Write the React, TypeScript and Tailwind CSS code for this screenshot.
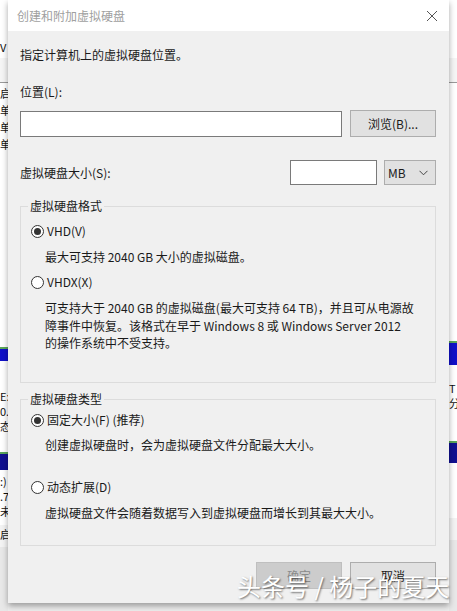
import React from 'react';

const font = { fontFamily: '"Noto Sans CJK SC", "Noto Sans", sans-serif' };

function Radio({ checked }: { checked?: boolean }) {
  return (
    <span className="w-[13px] h-[13px] rounded-full border border-[#333] bg-white flex items-center justify-center flex-shrink-0">
      {checked && <span className="w-[7px] h-[7px] rounded-full bg-[#333]" />}
    </span>
  );
}

function Group({ title, height, children }: { title: string; height: string; children: React.ReactNode }) {
  return (
    <div className={`relative border border-[#dcdcdc] ${height}`}>
      <span className="absolute -top-[10px] left-[7px] bg-[#f0f0f0] px-[2px] leading-[18px] text-[12px] text-[#1a1a1a]">{title}</span>
      {children}
    </div>
  );
}

// 背后窗口露出的边缘
function Side({ right }: { right?: boolean }) {
  return (
    <div className="w-[8px] bg-white flex flex-col text-[11px] leading-[18px] text-[#111] overflow-hidden">
      <div className="h-[38px]" />
      <div className="h-[20px]">{right ? '' : 'V'}</div>
      <div className="h-[24px] bg-[#f5f5f5]" />
      <div className="h-[1px] bg-[#999]" />
      {!right && (
        <div className="h-[70px] leading-[17px] pt-[2px]">
          <div>启</div><div>单</div><div>单</div><div>单</div>
        </div>
      )}
      {right && <div className="h-[70px]" />}
      <div className={right ? 'h-[188px]' : 'h-[194px]'} />
      <div className="h-[2px] bg-[#5aa55a]" />
      <div className={right ? 'h-[22px] bg-[#1010c8]' : 'h-[12px] bg-[#1010c8]'} />
      <div className={right ? 'h-[76px] leading-[15px] pt-[16px]' : 'h-[91px] leading-[15px] pt-[28px]'}>
        {right ? <><div>T</div><div>分</div></> : <><div>E:</div><div>0.</div><div>态</div></>}
      </div>
      <div className="h-[2px] bg-[#5aa55a]" />
      <div className={right ? 'h-[20px] bg-[#101090]' : 'h-[16px] bg-[#101090]'} />
      <div className="h-[55px] leading-[15px] pt-[4px]">{right ? '' : <><div>:)</div><div>.7</div><div>未</div></>}</div>
      <div className="h-[22px] bg-[#f3f3f3]">{right ? '' : '启'}</div>
      <div className="flex-1 bg-[#e8e8e8]" />
    </div>
  );
}

export default function App() {
  return (
    <div className="w-[457px] h-[611px] flex bg-[#ededed] overflow-hidden" style={font}>
      <Side />
      <div className="relative w-[441px] h-[603px] flex flex-col bg-[#f0f0f0] shadow-[0_3px_6px_rgba(0,0,0,0.35)] text-[12px] text-[#1a1a1a]">
        {/* 标题栏 */}
        <div className="h-[31px] bg-white flex items-center justify-between pl-[9px] pr-[10px]">
          <span className="text-[#a0a0a0] text-[12px]">创建和附加虚拟硬盘</span>
          <svg width="12" height="12" viewBox="0 0 12 12" className="mr-[1px]">
            <path d="M1 1 L11 11 M11 1 L1 11" stroke="#555" strokeWidth="1" />
          </svg>
        </div>

        <div className="flex flex-col pl-[12px] pr-[13px]">
          <div className="mt-[15px] h-[18px] leading-[18px]">指定计算机上的虚拟硬盘位置。</div>
          <div className="mt-[19px] h-[18px] leading-[18px]">位置(L):</div>
          <div className="mt-[10px] flex gap-[8px]">
            <div className="w-[322px] h-[26px] bg-white border border-[#7a7a7a]" />
            <div className="w-[86px] h-[27px] bg-[#e1e1e1] border border-[#adadad] flex items-center justify-center -mt-[1px]">浏览(B)...</div>
          </div>
          <div className="mt-[23px] flex items-center h-[25px]">
            <span className="flex-1">虚拟硬盘大小(S):</span>
            <div className="w-[87px] h-[25px] bg-white border border-[#7a7a7a]" />
            <div className="ml-[7px] w-[52px] h-[25px] bg-[#e1e1e1] border border-[#adadad] flex items-center justify-between pl-[3px] pr-[7px]">
              <span>MB</span>
              <svg width="9" height="6" viewBox="0 0 9 6">
                <path d="M0.5 0.8 L4.5 4.8 L8.5 0.8" fill="none" stroke="#444" strokeWidth="1" />
              </svg>
            </div>
          </div>

          <div className="mt-[21px]">
            <Group title="虚拟硬盘格式" height="h-[177px]">
              <div className="flex flex-col pl-[10px] pt-[15px]">
                <label className="flex items-center gap-[3px] h-[18px]"><Radio checked />VHD(V)</label>
                <div className="pl-[14px] mt-[8px] h-[18px] leading-[18px]">最大可支持 2040 GB 大小的虚拟磁盘。</div>
                <label className="mt-[7px] flex items-center gap-[3px] h-[18px]"><Radio />VHDX(X)</label>
                <div className="pl-[14px] mt-[8px] leading-[17.5px]">
                  可支持大于 2040 GB 的虚拟磁盘(最大可支持 64 TB)，并且可从电源故<br />
                  障事件中恢复。该格式在早于 Windows 8 或 Windows Server 2012<br />
                  的操作系统中不受支持。
                </div>
              </div>
            </Group>
          </div>

          <div className="mt-[16px]">
            <Group title="虚拟硬盘类型" height="h-[147px]">
              <div className="flex flex-col pl-[10px] pt-[11px]">
                <label className="flex items-center gap-[3px] h-[18px]"><Radio checked />固定大小(F) (推荐)</label>
                <div className="pl-[14px] mt-[7px] h-[18px] leading-[18px]">创建虚拟硬盘时，会为虚拟硬盘文件分配最大大小。</div>
                <label className="mt-[24px] flex items-center gap-[3px] h-[18px]"><Radio />动态扩展(D)</label>
                <div className="pl-[14px] mt-[8px] h-[18px] leading-[18px]">虚拟硬盘文件会随着数据写入到虚拟硬盘而增长到其最大大小。</div>
              </div>
            </Group>
          </div>

          <div className="mt-[16px] flex justify-end gap-[8px]">
            <div className="w-[86px] h-[27px] bg-[#cccccc] border border-[#bfbfbf] text-[#8a8a8a] flex items-center justify-center">确定</div>
            <div className="w-[86px] h-[27px] bg-[#e1e1e1] border border-[#adadad] flex items-center justify-center">取消</div>
          </div>
        </div>

        {/* 水印 */}
        <div className="absolute left-[229px] top-[570px] text-[24px] leading-[32px] text-white whitespace-nowrap [text-shadow:1px_1px_2px_rgba(0,0,0,0.55)]">
          头条号 / 杨子的夏天
        </div>
      </div>
      <Side right />
    </div>
  );
}
